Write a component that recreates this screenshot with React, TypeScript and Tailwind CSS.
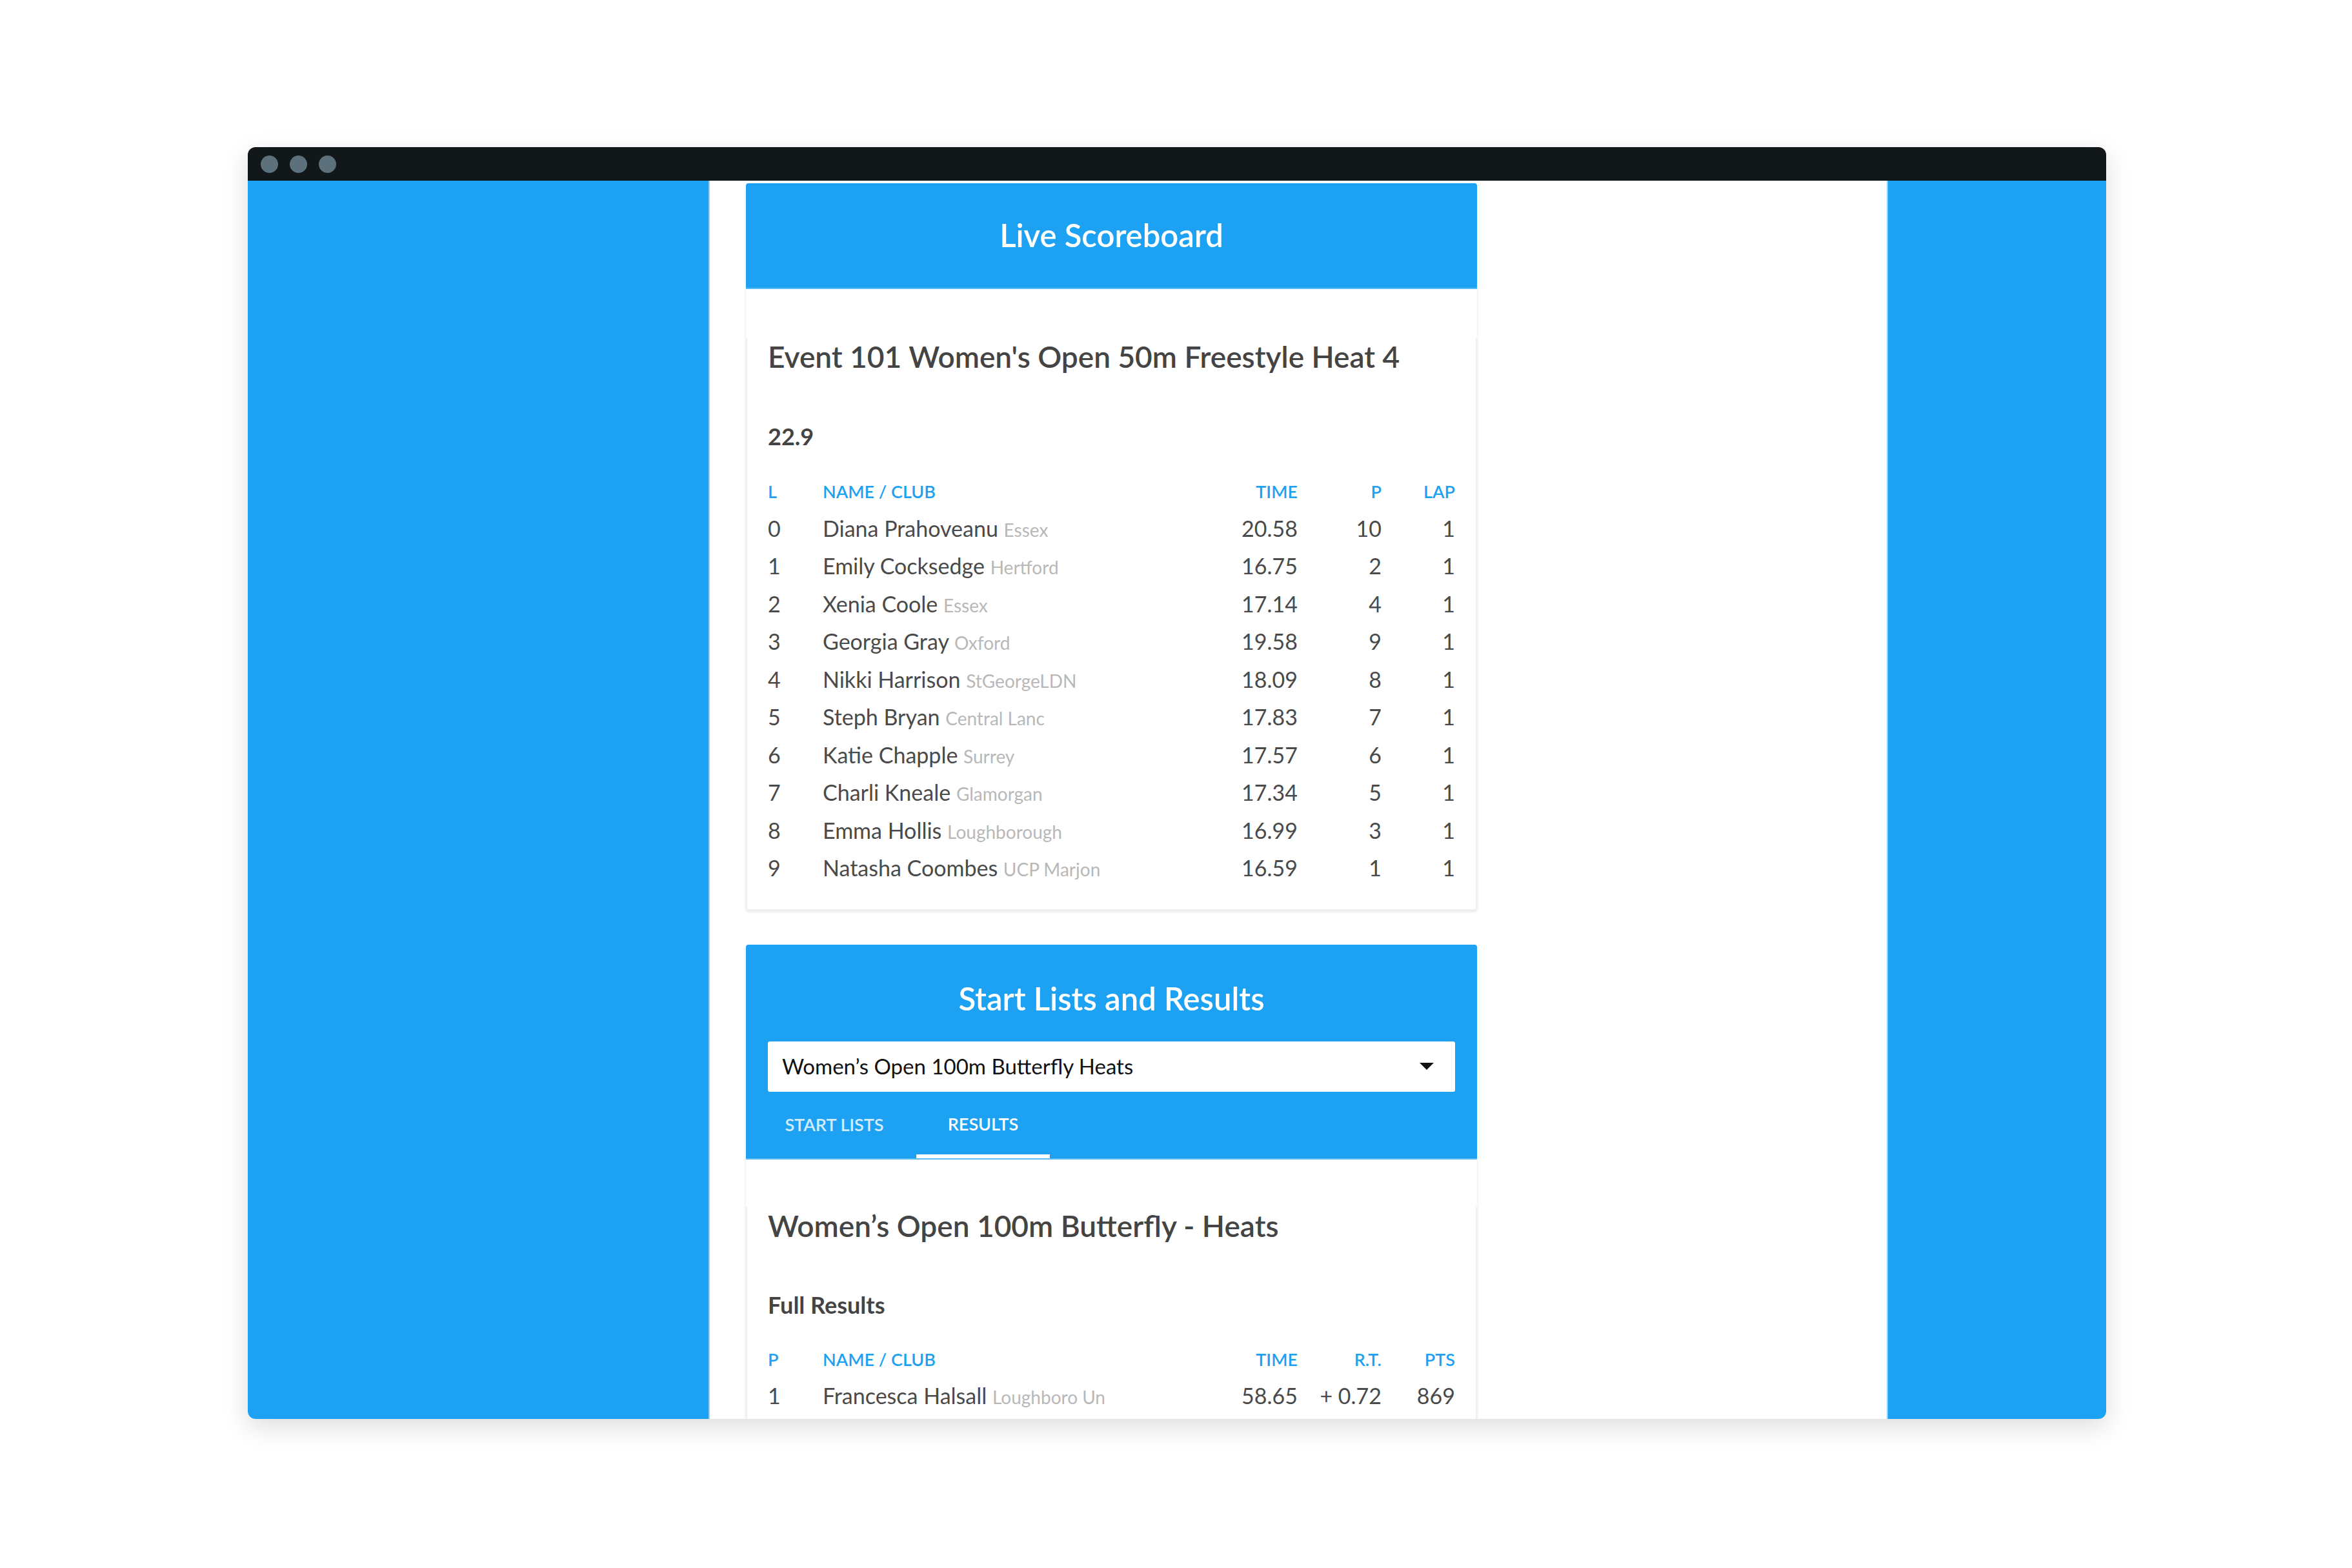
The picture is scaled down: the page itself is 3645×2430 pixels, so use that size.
import React from "react";

const liveRows: [string, string, string, string, string, string][] = [
  ["0", "Diana Prahoveanu", "Essex", "20.58", "10", "1"],
  ["1", "Emily Cocksedge", "Hertford", "16.75", "2", "1"],
  ["2", "Xenia Coole", "Essex", "17.14", "4", "1"],
  ["3", "Georgia Gray", "Oxford", "19.58", "9", "1"],
  ["4", "Nikki Harrison", "StGeorgeLDN", "18.09", "8", "1"],
  ["5", "Steph Bryan", "Central Lanc", "17.83", "7", "1"],
  ["6", "Katie Chapple", "Surrey", "17.57", "6", "1"],
  ["7", "Charli Kneale", "Glamorgan", "17.34", "5", "1"],
  ["8", "Emma Hollis", "Loughborough", "16.99", "3", "1"],
  ["9", "Natasha Coombes", "UCP Marjon", "16.59", "1", "1"],
];

function HeaderRow({ cols }: { cols: string[] }) {
  return (
    <div className="flex h-[58.5px] leading-[58.5px] text-[27px] font-semibold text-[#1da1f2] uppercase">
      <div className="w-[85px]">{cols[0]}</div>
      <div className="flex-1">{cols[1]}</div>
      <div className="w-[150px] text-right">{cols[2]}</div>
      <div className="w-[130px] text-right">{cols[3]}</div>
      <div className="w-[114px] text-right">{cols[4]}</div>
    </div>
  );
}

function DataRow({ r }: { r: string[] }) {
  return (
    <div className="flex h-[58.5px] leading-[54.5px] pb-[4px] text-[34px] text-[#4a4a4a]">
      <div className="w-[85px]">{r[0]}</div>
      <div className="flex-1 whitespace-nowrap">
        {r[1]} <span className="text-[28px] text-[#b8b8b8]">{r[2]}</span>
      </div>
      <div className="w-[150px] text-right">{r[3]}</div>
      <div className="w-[130px] text-right">{r[4]}</div>
      <div className="w-[114px] text-right">{r[5]}</div>
    </div>
  );
}

export default function App() {
  return (
    <div className="w-[3645px] h-[2430px] bg-white pt-[228px] pl-[384px] font-['Lato','Noto_Sans',sans-serif]">
      <div className="w-[2880px] h-[1971px] rounded-[12px] overflow-hidden shadow-[0_12px_40px_rgba(0,0,0,0.14)] flex flex-col">
        <div className="h-[52px] shrink-0 bg-[#12171a] flex items-center pl-[20px] gap-[18px]">
          <div className="w-[27px] h-[27px] rounded-full bg-[#5d717c]" />
          <div className="w-[27px] h-[27px] rounded-full bg-[#5d717c]" />
          <div className="w-[27px] h-[27px] rounded-full bg-[#5d717c]" />
        </div>
        <div className="flex flex-1 min-h-0">
          <div className="w-[716px] shrink-0 bg-[#1da1f2] border-r-2 border-[#8fd0f8]" />
          <div className="w-[1824px] shrink-0 bg-white pl-[56px] pt-[4px] overflow-hidden">
            {/* Live Scoreboard card */}
            <div className="w-[1133px] rounded-[4px] bg-white shadow-[0_2px_4px_rgba(0,0,0,0.10)]">
              <div className="h-[164px] bg-[#1da1f2] rounded-t-[4px] border-b-2 border-[#5cbcf6] flex items-center justify-center text-white text-[49px] font-semibold">
                Live Scoreboard
              </div>
              <div className="px-[32px] pb-[32px] border-x-2 border-b-2 border-[#f0f0f0] rounded-b-[4px]">
                <div className="mt-[75px] h-[60px] leading-[60px] text-[46px] font-semibold text-[#444]">
                  Event 101 Women's Open 50m Freestyle Heat 4
                </div>
                <div className="mt-[71px] h-[44px] leading-[44px] text-[36px] font-bold text-[#444]">
                  22.9
                </div>
                <div className="mt-[35px]">
                  <HeaderRow cols={["L", "Name / Club", "Time", "P", "Lap"]} />
                  {liveRows.map((r) => (
                    <DataRow key={r[0]} r={r} />
                  ))}
                </div>
              </div>
            </div>

            {/* Start Lists card */}
            <div className="mt-[53px] w-[1133px] rounded-t-[4px] bg-white shadow-[0_2px_4px_rgba(0,0,0,0.10)]">
              <div className="h-[333px] bg-[#1da1f2] rounded-t-[4px] border-b-2 border-[#5cbcf6] flex flex-col">
                <div className="mt-[51px] h-[64px] leading-[64px] text-center text-white text-[49px] font-semibold">
                  Start Lists and Results
                </div>
                <div className="mt-[35px] mx-[34px] h-[78px] bg-white rounded-[3px] flex items-center justify-between pl-[22px] pr-[33px]">
                  <span className="text-[33px] text-[#111]">Women’s Open 100m Butterfly Heats</span>
                  <svg width="22" height="11" viewBox="0 0 22 11">
                    <path d="M0 0H22L11 11Z" fill="#111" />
                  </svg>
                </div>
                <div className="flex-1 flex ml-[10px]">
                  <div className="w-[254px] flex items-center justify-center text-[27px] font-semibold text-white/80 uppercase">
                    Start Lists
                  </div>
                  <div className="w-[207px] flex flex-col">
                    <div className="flex-1 flex items-center justify-center text-[27px] font-semibold text-white uppercase pt-[4px]">
                      Results
                    </div>
                    <div className="h-[6px] bg-white" />
                  </div>
                </div>
              </div>
              <div className="px-[32px] h-[500px] border-x-2 border-[#f0f0f0]">
                <div className="mt-[73px] h-[60px] leading-[60px] text-[46px] font-semibold text-[#444]">
                  Women’s Open 100m Butterfly - Heats
                </div>
                <div className="mt-[70px] h-[44px] leading-[44px] text-[36px] font-bold text-[#444]">
                  Full Results
                </div>
                <div className="mt-[34px]">
                  <HeaderRow cols={["P", "Name / Club", "Time", "R.T.", "Pts"]} />
                  <DataRow r={["1", "Francesca Halsall", "Loughboro Un", "58.65", "+ 0.72", "869"]} />
                </div>
              </div>
            </div>
          </div>
          <div className="w-[340px] shrink-0 bg-[#1da1f2] border-l-2 border-[#8fd0f8]" />
        </div>
      </div>
    </div>
  );
}
